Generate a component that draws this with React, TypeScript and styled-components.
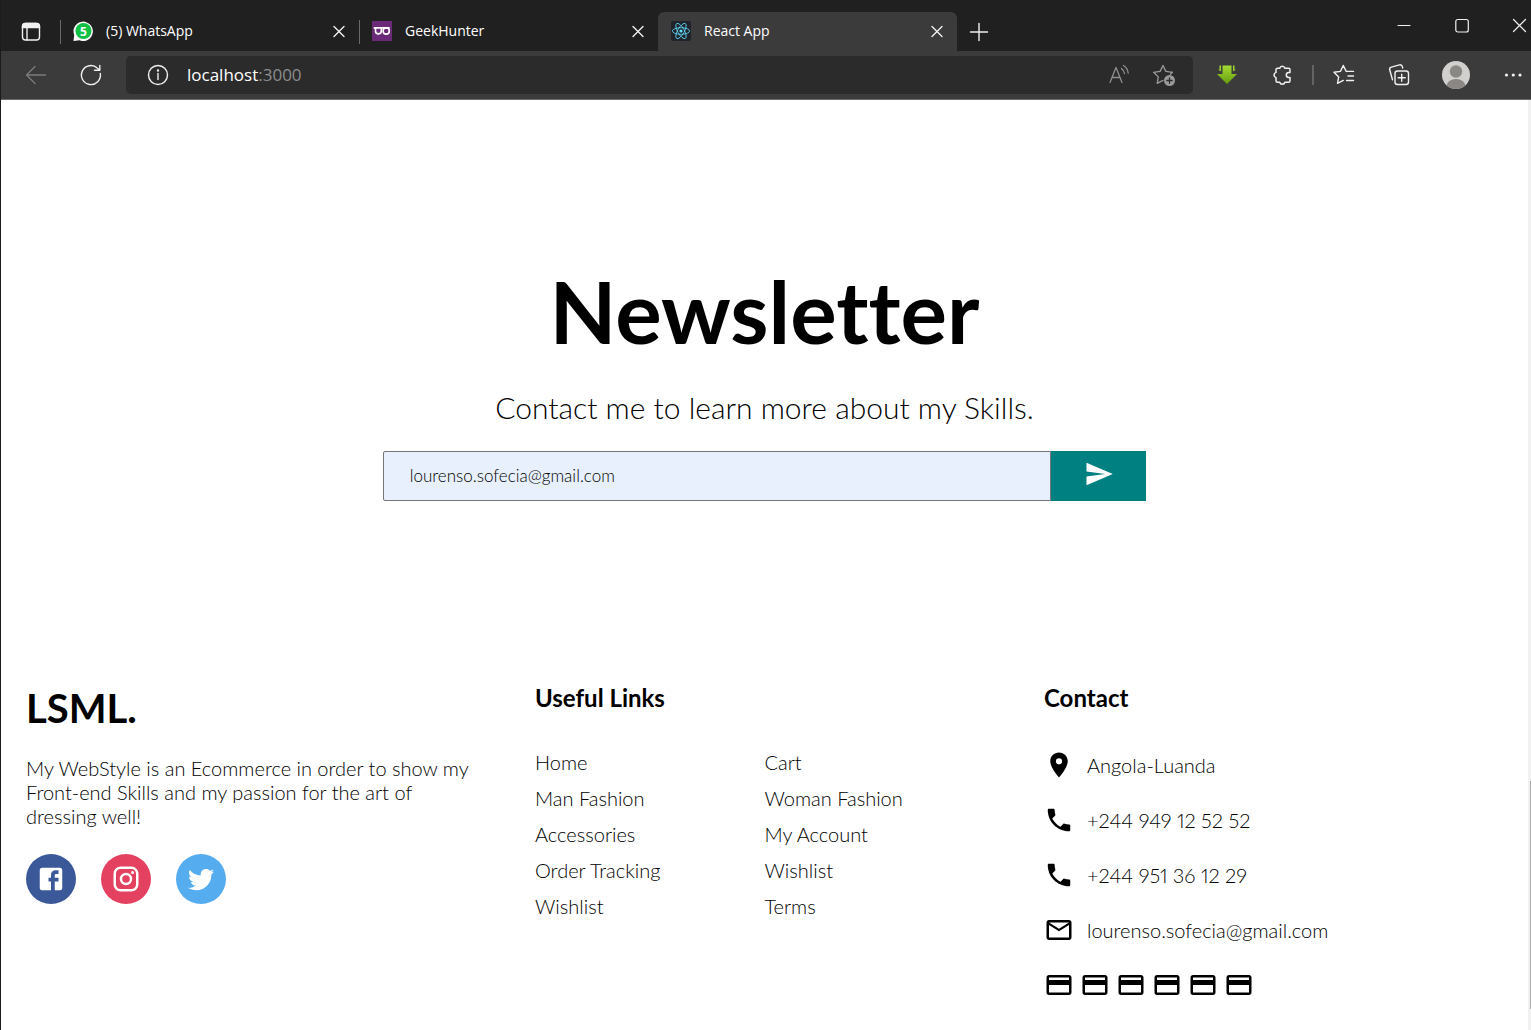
import React from "react";
import styled, { createGlobalStyle } from "styled-components";
import { MdSend, MdRoom, MdPhone, MdMailOutline, MdPayment } from "react-icons/md";

const GlobalStyle = createGlobalStyle`
  *, *::before, *::after { box-sizing: border-box; }
  html, body, #root { height: 100%; }
  body { margin: 0; background: #fff; overflow: hidden; }
  button, input { font: inherit; }
  h1, h2, h3, p, ul { margin: 0; padding: 0; }
`;

const uiFont = `"Open Sans", "Noto Sans", sans-serif`;
const pageFont = `Lato, "Open Sans", sans-serif`;

const Window = styled.div`
  display: flex;
  flex-direction: column;
  height: 100%;
  border-left: 1px solid #1b1b1b;
`;

/* ---------- Browser chrome ---------- */

const TitleBar = styled.div`
  display: flex;
  align-items: stretch;
  height: 51px;
  padding-top: 12px;
  background: #202020;
  color: #fff;
  font: 14px/20px ${uiFont};
  flex: none;
`;

const IconButton = styled.button<{ $size?: number; $color?: string }>`
  display: flex;
  align-items: center;
  justify-content: center;
  flex: none;
  width: ${(p) => p.$size ?? 24}px;
  height: ${(p) => p.$size ?? 24}px;
  padding: 0;
  border: 0;
  background: none;
  color: ${(p) => p.$color ?? "#f0f0f0"};
  cursor: pointer;
`;

const TabActions = styled.div`
  display: flex;
  align-items: center;
  padding-left: 18px;
  width: 59px;
  flex: none;
`;

const Tab = styled.div<{ $active?: boolean }>`
  display: flex;
  align-items: center;
  flex: 0 1 299px;
  min-width: 0;
  padding: 0 8px 1px 13px;
  background: ${(p) => (p.$active ? "#3b3b3b" : "transparent")};
  border-radius: 6px 6px 0 0;
  position: relative;

  &::before {
    content: "";
    display: ${(p) => (p.$active ? "none" : "block")};
    position: absolute;
    left: 0;
    top: 8px;
    width: 1px;
    height: 24px;
    background: #6a6a6a;
  }
`;

const TabTitle = styled.span`
  flex: 1;
  margin-left: 13px;
  overflow: hidden;
  white-space: nowrap;
`;

const NewTab = styled.div`
  display: flex;
  align-items: center;
  margin-left: 10px;
`;

const WindowControls = styled.div`
  display: flex;
  align-items: flex-start;
  gap: 34px;
  margin-left: auto;
`;

const Toolbar = styled.div`
  display: flex;
  align-items: center;
  height: 49px;
  padding: 0 6px 0 23px;
  background: #3b3b3b;
  border-bottom: 1px solid #6b6868;
  flex: none;
`;

const NavButtons = styled.div`
  display: flex;
  gap: 31px;
  margin-right: 23px;
`;

const AddressBar = styled.div`
  display: flex;
  align-items: center;
  flex: 1;
  height: 38px;
  padding: 0 17px 0 21px;
  gap: 18px;
  background: #2b2b2b;
  border-radius: 5px;
`;

const Address = styled.div`
  flex: 1;
  color: #fff;
  font: 17px/24px ${uiFont};
  outline: none;

  span { color: #8d8d8d; }
`;

const AddressActions = styled.div`
  display: flex;
  gap: 21px;
`;

const Actions = styled.div`
  display: flex;
  align-items: center;
  gap: 31px;
  margin-left: 22px;
`;

const ActionGroup = styled.div`
  display: flex;
  align-items: center;
  gap: 18px;
`;

const Divider = styled.span`
  width: 2px;
  height: 20px;
  background: #636363;
`;

/* ---------- Page ---------- */

const Viewport = styled.div`
  display: flex;
  flex: 1;
  min-height: 0;
`;

const Page = styled.main`
  flex: 1;
  background: #fff;
  color: #000;
  font: 300 20px/24px ${pageFont};
  font-variant-numeric: proportional-nums;
  font-variant-ligatures: none;
`;

const ScrollTrack = styled.div`
  width: 3px;
  padding: 681px 0 0 2px;
  background: #f1f1f1;
`;

const ScrollThumb = styled.div`
  height: 228px;
  background: #a8a8a8;
`;

const Newsletter = styled.section`
  display: flex;
  flex-direction: column;
  align-items: center;
  gap: 25px;
  padding: 158px 0;
`;

const Headline = styled.h1`
  font-size: 87px;
  line-height: 105px;
  font-weight: 700;
`;

const Lead = styled.p`
  font-size: 30px;
  line-height: 38px;
`;

const Form = styled.form`
  display: flex;
  width: 50%;
  height: 50px;
`;

const EmailInput = styled.input`
  flex: 1;
  min-width: 0;
  padding: 0 26px;
  border: 1px solid #767676;
  border-radius: 2px 0 0 2px;
  background: #e8f0fe;
  color: #000;
  font-size: 17px;
  line-height: 24px;
  outline: none;
`;

const SendButton = styled.button`
  display: flex;
  justify-content: center;
  flex: 0 0 12.5%;
  padding: 8px 0;
  border: 0;
  background: teal;
  color: #fff;
  cursor: pointer;
`;

const Footer = styled.footer`
  display: grid;
  grid-template-columns: repeat(3, 1fr);
`;

const Column = styled.section`
  padding: 25px;
`;

const Logo = styled.h2`
  font-size: 40px;
  line-height: 48px;
  font-weight: 700;
`;

const About = styled.p`
  margin: 24px 0 26px;
`;

const Socials = styled.div`
  display: flex;
  gap: 25px;
`;

const SocialLink = styled.a<{ $color: string }>`
  display: flex;
  align-items: center;
  justify-content: center;
  width: 50px;
  height: 50px;
  border-radius: 50%;
  background: ${(p) => p.$color};
  color: #fff;
`;

const ColumnTitle = styled.h3`
  margin-bottom: 38px;
  font-size: 24px;
  line-height: 28px;
  font-weight: 700;
`;

const LinkList = styled.ul`
  display: grid;
  grid-template-columns: 1fr 1fr;
  row-gap: 12px;
  list-style: none;
`;

const TextLink = styled.a`
  color: inherit;
  text-decoration: none;
`;

const ContactList = styled.ul`
  display: flex;
  flex-direction: column;
  gap: 25px;
  list-style: none;
`;

const ContactItem = styled.li`
  display: flex;
  align-items: center;
  gap: 13px;
  height: 30px;
`;

const Payments = styled.div`
  display: flex;
  gap: 6px;
  margin-top: 25px;
`;

/* ---------- Icons ---------- */

const Glyph = ({ size = 24, width = 1.4, children }: { size?: number; width?: number; children: React.ReactNode }) => (
  <svg width={size} height={size} viewBox={`0 0 ${size} ${size}`} fill="none" stroke="currentColor"
    strokeWidth={width} strokeLinecap="round" strokeLinejoin="round" aria-hidden="true">
    {children}
  </svg>
);

const WorkspaceIcon = () => (
  <Glyph>
    <rect x="3.5" y="3.5" width="17" height="16.5" rx="3" />
    <path d="M3.5 7.5V6a3 3 0 0 1 3-2.5h11a3 3 0 0 1 3 2.5v1.500z" fill="currentColor" />
    <path d="M8 8v12" />
  </Glyph>
);

const CrossIcon = () => <Glyph><path d="M7 7.500l10 10M17 7.500l-10 10" /></Glyph>;
const PlusIcon = () => <Glyph><path d="M12 3.500v17M3.500 12h17" /></Glyph>;

const WhatsAppIcon = () => (
  <svg width="20" height="20" viewBox="0 0 20 20" aria-hidden="true">
    <path d="M0.500 20l0.700-6A9.700 9.700 0 1 1 6.500 19.300z" fill="#fff" />
    <circle cx="10.500" cy="10" r="8" fill="#10c143" />
    <text x="10.500" y="14.500" textAnchor="middle" fontFamily="Open Sans, sans-serif" fontSize="12" fontWeight="700" fill="#fff">5</text>
  </svg>
);

const GlassesIcon = () => (
  <svg width="20" height="20" viewBox="0 0 20 20" aria-hidden="true">
    <path fill="#6b2a78" d="M0 0h20v20H0z" />
    <g fill="none" stroke="#fff" strokeWidth="1.600">
      <path d="M1.700 6.900h16M3.500 7v3a2.900 2.900 0 0 0 5.800 0V7" />
      <circle cx="14.200" cy="10" r="3.100" />
    </g>
  </svg>
);

const ReactIcon = () => (
  <svg width="20" height="20" viewBox="0 0 20 20" aria-hidden="true">
    <rect width="20" height="20" rx="2" fill="#20232a" />
    <circle cx="10" cy="10" r="1.600" fill="#61dafb" />
    <g fill="none" stroke="#61dafb" strokeWidth="0.800">
      <ellipse cx="10" cy="10" rx="8.600" ry="3.300" />
      <ellipse cx="10" cy="10" rx="8.600" ry="3.300" transform="rotate(60 10 10)" />
      <ellipse cx="10" cy="10" rx="8.600" ry="3.300" transform="rotate(120 10 10)" />
    </g>
  </svg>
);

const MinimizeIcon = () => <Glyph width={1}><path d="M7 13.500h12" /></Glyph>;
const MaximizeIcon = () => <Glyph width={1.2}><rect x="6.800" y="7.500" width="12.500" height="12.500" rx="2" /></Glyph>;
const CloseIcon = () => <Glyph width={1.2}><path d="M6.500 7.500l12 12M18.500 7.500l-12 12" /></Glyph>;

const BackIcon = () => <Glyph width={1.3}><path d="M21.500 12h-19M11 3.500L2.500 12l8.500 8.500" /></Glyph>;
const ReloadIcon = () => (
  <Glyph><path d="M21.300 10.500A9.500 9.500 0 1 1 18.500 5.200L20.500 7M20.800 2.500V7.300H15.500" /></Glyph>
);
const InfoIcon = () => (
  <Glyph size={22}>
    <circle cx="11" cy="11" r="9.500" />
    <path d="M11 9.500v6" />
    <circle cx="11" cy="6.500" r="0.500" fill="currentColor" />
  </Glyph>
);
const ReadAloudIcon = () => (
  <Glyph width={1.3}>
    <path d="M3 19.500L9 4.500l6 15M5 14.500h8" />
    <path d="M14.500 5.500q2.500 2 3 5M16.500 2.500q4 2.500 4.700 7.500" />
  </Glyph>
);

const StarAddIcon = () => (
  <Glyph width={1.3}>
    <path d="M11 2.500l2.900 5.900 6.500.900M11 2.500L8.100 8.400l-6.500.900 4.700 4.600-1.100 6.500 5.800-3" />
    <path d="M20.400 9.300l-2 1.900" />
    <circle cx="17.500" cy="17.500" r="5.500" fill="currentColor" stroke="none" />
    <path d="M17.500 14.800v5.400M14.800 17.500h5.400" stroke="#2b2b2b" />
  </Glyph>
);

const DownloadArrowIcon = () => (
  <svg width="24" height="24" viewBox="0 0 24 24" aria-hidden="true">
    <defs>
      <linearGradient id="leaf" gradientUnits="userSpaceOnUse" x1="0" y1="2" x2="0" y2="21">
        <stop offset="0" stopColor="#a5dc35" />
        <stop offset="1" stopColor="#659d0e" />
      </linearGradient>
    </defs>
    <g fill="url(#leaf)">
      <path d="M7.500 2.500h9v8.500H22L12 21 2 11h5.500z" />
      <path d="M4.500 2.500H6v6L3 6.500h1.500z" />
      <path d="M19.500 2.500H18v6l3-2h-1.500z" />
    </g>
  </svg>
);

const PuzzleIcon = () => (
  <Glyph width={1.5}>
    <path d="M7.500 5.200h2.200a2.700 2.700 0 0 1 5.200 0h3.600a1.500 1.500 0 0 1 1.500 1.500v2.800h-1.200a2.500 2.500 0 0 0 0 5H20v3.300a1.500 1.500 0 0 1-1.500 1.500h-3.600a2.700 2.700 0 0 1-5.200 0H7.500A1.500 1.500 0 0 1 6 17.800v-3.200a2.700 2.700 0 0 1 0-5.200V6.700A1.500 1.500 0 0 1 7.500 5.200z" />
  </Glyph>
);

const FavoritesIcon = () => (
  <Glyph>
    <path d="M14.500 8.400h7M16 13h5.500M14.500 17.500h7M11.300 2.500l2.900 5.900M11.300 2.500L8.400 8.400l-6.400.900 4.700 4.600-1.200 6.500 5.800-3" />
  </Glyph>
);

const CollectionsIcon = () => (
  <Glyph>
    <rect x="8" y="8" width="13.500" height="13.500" rx="2.500" />
    <path d="M14.700 11.200v7M11.200 14.700h7M5.500 16.800L2.700 6.800a2.300 2.300 0 0 1 1.600-2.700l8.200-2.200a2.300 2.300 0 0 1 2.800 1.700l.400 1.400" />
  </Glyph>
);

const AvatarIcon = () => (
  <svg width="28" height="28" viewBox="0 0 28 28" aria-hidden="true">
    <defs><clipPath id="face"><circle cx="14" cy="14" r="14" /></clipPath></defs>
    <g clipPath="url(#face)">
      <path d="M0 0h28v28H0z" fill="#d2d0ce" />
      <circle cx="14" cy="10.500" r="6.200" fill="#8a8784" />
      <ellipse cx="14" cy="25" rx="9.500" ry="7" fill="#8a8784" />
    </g>
  </svg>
);

const DotsIcon = () => (
  <Glyph>
    <g fill="currentColor" stroke="none">
      <circle cx="5.500" cy="12" r="1.600" />
      <circle cx="12.300" cy="12" r="1.600" />
      <circle cx="19" cy="12" r="1.600" />
    </g>
  </Glyph>
);

const socials = [
  {
    name: "Facebook",
    color: "#3b5999",
    path: "M5 3h14a2 2 0 0 1 2 2v14a2 2 0 0 1-2 2H5a2 2 0 0 1-2-2V5a2 2 0 0 1 2-2m13 2h-2.500A3.500 3.500 0 0 0 12 8.500V11h-2v3h2v7h3v-7h3v-3h-3V9a1 1 0 0 1 1-1h2V5z",
  },
  {
    name: "Instagram",
    color: "#e4405f",
    path: "M7.800 2h8.400C19.400 2 22 4.600 22 7.800v8.400a5.800 5.800 0 0 1-5.800 5.800H7.800C4.600 22 2 19.400 2 16.200V7.800A5.800 5.800 0 0 1 7.800 2m-.200 2A3.600 3.600 0 0 0 4 7.600v8.800C4 18.390 5.610 20 7.600 20h8.800a3.600 3.600 0 0 0 3.600-3.600V7.600C20 5.610 18.390 4 16.400 4H7.600m9.650 1.500a1.250 1.250 0 0 1 1.250 1.250A1.250 1.250 0 0 1 17.250 8 1.250 1.250 0 0 1 16 6.750a1.250 1.250 0 0 1 1.250-1.250M12 7a5 5 0 0 1 5 5 5 5 0 0 1-5 5 5 5 0 0 1-5-5 5 5 0 0 1 5-5m0 2a3 3 0 0 0-3 3 3 3 0 0 0 3 3 3 3 0 0 0 3-3 3 3 0 0 0-3-3z",
  },
  {
    name: "Twitter",
    color: "#55acee",
    path: "M22.460 6c-.770.350-1.600.580-2.460.690.880-.530 1.560-1.370 1.880-2.380-.830.500-1.750.850-2.720 1.050C18.370 4.500 17.260 4 16 4c-2.350 0-4.270 1.920-4.270 4.290 0 .340.040.670.110.980C8.280 9.090 5.110 7.380 3 4.790c-.370.630-.580 1.370-.580 2.150 0 1.490.750 2.810 1.910 3.560-.710 0-1.370-.200-1.950-.500v.030c0 2.080 1.480 3.820 3.440 4.210a4.220 4.220 0 0 1-1.930.070 4.280 4.280 0 0 0 4 2.980 8.521 8.521 0 0 1-5.330 1.840c-.340 0-.680-.020-1.020-.060C3.440 20.290 5.700 21 8.120 21 16 21 20.330 14.460 20.330 8.790c0-.190 0-.370-.010-.560.840-.600 1.560-1.360 2.140-2.230z",
  },
];

const tabs = [
  { title: "(5) WhatsApp", icon: <WhatsAppIcon /> },
  { title: "GeekHunter", icon: <GlassesIcon /> },
  { title: "React App", icon: <ReactIcon />, active: true },
];

const links = [
  "Home", "Cart", "Man Fashion", "Woman Fashion", "Accessories",
  "My Account", "Order Tracking", "Wishlist", "Wishlist", "Terms",
];

const contacts = [
  { icon: <MdRoom size={30} />, text: "Angola-Luanda" },
  { icon: <MdPhone size={30} />, text: "+244 949 12 52 52" },
  { icon: <MdPhone size={30} />, text: "+244 951 36 12 29" },
  { icon: <MdMailOutline size={30} />, text: "lourenso.sofecia@gmail.com" },
];

export default function App() {
  return (
    <Window>
      <GlobalStyle />
      <TitleBar>
        <TabActions>
          <IconButton aria-label="Tab actions"><WorkspaceIcon /></IconButton>
        </TabActions>
        {tabs.map((tab) => (
          <Tab key={tab.title} $active={tab.active}>
            {tab.icon}
            <TabTitle>{tab.title}</TabTitle>
            <IconButton aria-label={`Close ${tab.title}`}><CrossIcon /></IconButton>
          </Tab>
        ))}
        <NewTab>
          <IconButton aria-label="New tab"><PlusIcon /></IconButton>
        </NewTab>
        <WindowControls>
          <IconButton aria-label="Minimize"><MinimizeIcon /></IconButton>
          <IconButton aria-label="Maximize"><MaximizeIcon /></IconButton>
          <IconButton aria-label="Close"><CloseIcon /></IconButton>
        </WindowControls>
      </TitleBar>

      <Toolbar>
        <NavButtons>
          <IconButton aria-label="Back" $color="#7c7c7c"><BackIcon /></IconButton>
          <IconButton aria-label="Reload"><ReloadIcon /></IconButton>
        </NavButtons>
        <AddressBar>
          <IconButton aria-label="Site information" $size={22}><InfoIcon /></IconButton>
          <Address role="textbox" aria-label="Address" contentEditable suppressContentEditableWarning spellCheck={false}>
            localhost<span>:3000</span>
          </Address>
          <AddressActions>
            <IconButton aria-label="Read aloud" $color="#8f8f8f"><ReadAloudIcon /></IconButton>
            <IconButton aria-label="Add to favorites" $color="#9a9a9a"><StarAddIcon /></IconButton>
          </AddressActions>
        </AddressBar>
        <Actions>
          <IconButton aria-label="Downloader"><DownloadArrowIcon /></IconButton>
          <ActionGroup>
            <IconButton aria-label="Extensions"><PuzzleIcon /></IconButton>
            <Divider />
            <IconButton aria-label="Favorites"><FavoritesIcon /></IconButton>
          </ActionGroup>
          <IconButton aria-label="Collections"><CollectionsIcon /></IconButton>
          <IconButton aria-label="Profile" $size={28}><AvatarIcon /></IconButton>
          <IconButton aria-label="Settings and more"><DotsIcon /></IconButton>
        </Actions>
      </Toolbar>

      <Viewport>
        <Page>
          <Newsletter>
            <Headline>Newsletter</Headline>
            <Lead>Contact me to learn more about my Skills.</Lead>
            <Form onSubmit={(e) => e.preventDefault()}>
              <EmailInput type="email" aria-label="Your email" defaultValue="lourenso.sofecia@gmail.com" />
              <SendButton type="submit" aria-label="Send"><MdSend size={30} /></SendButton>
            </Form>
          </Newsletter>

          <Footer>
            <Column>
              <Logo>LSML.</Logo>
              <About>
                My WebStyle is an Ecommerce in order to show my Front-end Skills and my passion for the art of dressing well!
              </About>
              <Socials>
                {socials.map((s) => (
                  <SocialLink key={s.name} href="#" aria-label={s.name} $color={s.color}>
                    <svg width="30" height="30" viewBox="0 0 24 24" fill="currentColor" aria-hidden="true">
                      <path d={s.path} />
                    </svg>
                  </SocialLink>
                ))}
              </Socials>
            </Column>
            <Column>
              <ColumnTitle>Useful Links</ColumnTitle>
              <LinkList>
                {links.map((label, i) => (
                  <li key={i}><TextLink href="#">{label}</TextLink></li>
                ))}
              </LinkList>
            </Column>
            <Column>
              <ColumnTitle>Contact</ColumnTitle>
              <ContactList>
                {contacts.map((c) => (
                  <ContactItem key={c.text}>{c.icon}{c.text}</ContactItem>
                ))}
              </ContactList>
              <Payments>
                {[0, 1, 2, 3, 4, 5].map((n) => <MdPayment key={n} size={30} />)}
              </Payments>
            </Column>
          </Footer>
        </Page>
        <ScrollTrack><ScrollThumb /></ScrollTrack>
      </Viewport>
    </Window>
  );
}
